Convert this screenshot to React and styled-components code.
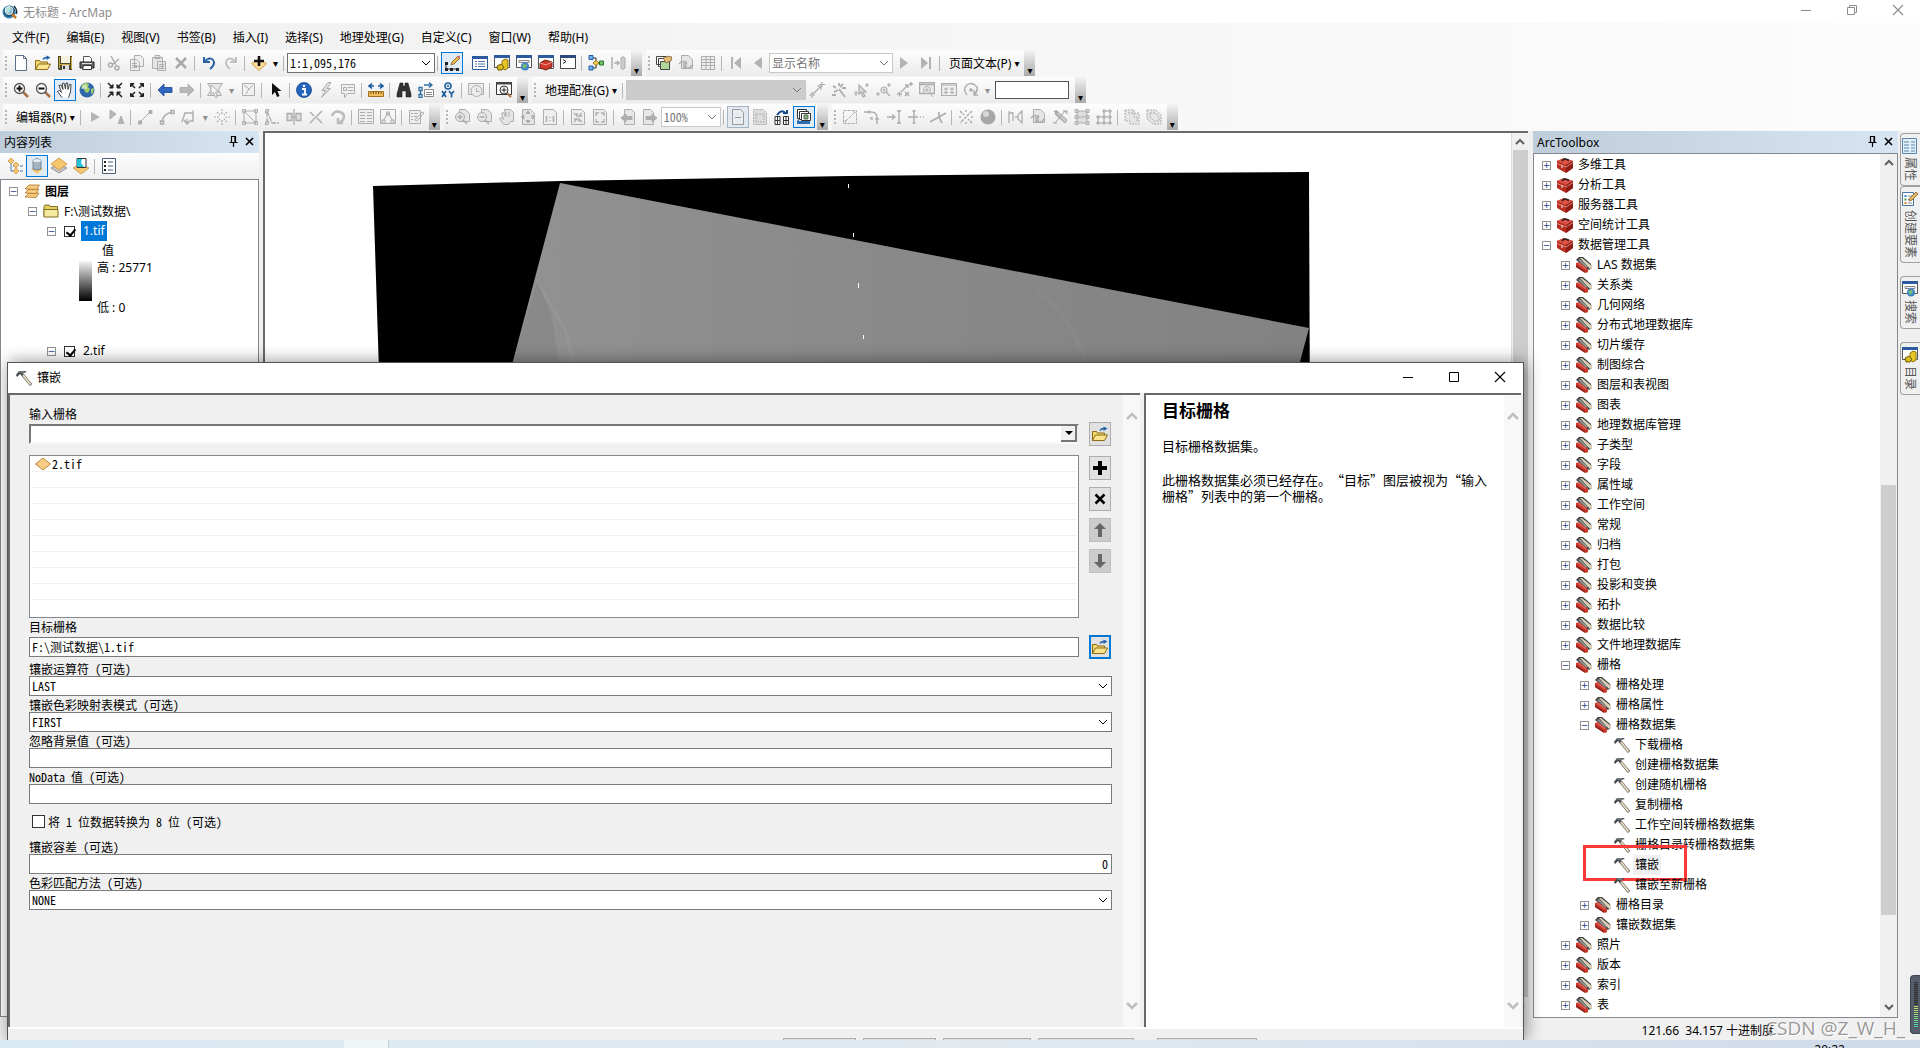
import React, { useState } from "react";
import styled, { createGlobalStyle, css } from "styled-components";

const ink = "#222";
const gray = "#adadad";

const icons = {
  logo: (
    <>
      <circle cx="7" cy="8" r="6.5" fill="#2d7fae" />
      <path d="M2 5q3-4 8-3l3 4-2 5-5 2-4-3z" fill="#164c73" />
      <path d="M4 3l4 0 1 3-3 3-3-2z" fill="#8fd0a5" />
      <circle cx="7" cy="6.500" r="4" fill="#bfe8f4" fillOpacity=".7" stroke="#e6f2f5" />
      <path d="M10 10l4 4" stroke="#c17a2a" strokeWidth="2.500" />
      <path d="M12 2q4 4 2 8" stroke="#102c40" fill="none" strokeWidth="1.500" />
    </>
  ),
  page: <path d="M2.500.5h8l3 3v12h-11zM10.500.5v3h3" fill="#fff" stroke="#5a6f8c" />,
  folder: (
    <>
      <path d="M.5 14.500v-9h4l1 1.500h7v3" fill="#f3d76f" stroke="#8d6a14" />
      <path d="M.5 14.500l3-5.500h12l-3 5.500z" fill="#fbe48e" stroke="#8d6a14" />
      <path d="M8 4.500q1-2 4-2" fill="none" stroke="#1f5fa5" strokeWidth="1.500" />
      <path d="M11.500.5l4 2-4 2.500z" fill="#1f5fa5" />
    </>
  ),
  save: (
    <>
      <path d="M1 1h14v14h-13l-1-1z" fill="#4c4a2a" />
      <path d="M4 1h9v7h-9z" fill="#f5f2dd" />
      <path d="M2 2h1v11h-1zM14 2h1v12h-1zM3 9h10v1H3z" fill="#c8aa40" />
      <path d="M5 10h7v5h-7z" fill="#ddd" />
      <path d="M6 11h2v3h-2z" fill="#333" />
    </>
  ),
  print: (
    <>
      <path d="M4.500 1.500h6l2 2v4h-8z" fill="#fff" stroke="#555" />
      <path d="M1 7h14v6h-14z" fill="#686868" stroke="#222" />
      <path d="M4.500 10.500h8v4h-9z" fill="#fff" stroke="#333" />
      <path d="M3 8.500h10" stroke="#ddd" />
    </>
  ),
  cut: (
    <g fill="none" stroke={gray} strokeWidth="1.500">
      <path d="M4 1l5 9M12 4l-7 6" />
      <circle cx="3.500" cy="10" r="2" />
      <circle cx="10" cy="13" r="2" />
    </g>
  ),
  copy: <path d="M5.500.5h6l3 3v8h-9zM1.500 4.500h6l3 3v8h-9zM3 8.500h5M3 10.500h5M3 12.500h5" fill="#eee" stroke={gray} />,
  paste: <path d="M1.500 2.500h10v11h-10zM4 .5h5v3h-5zM6.500 6.500h8v9h-8zM8 9.500h5M8 11.500h5M8 13.500h5" fill="#e6e6e6" stroke={gray} />,
  del: <path d="M3 3l10 10M13 3l-10 10" stroke="#a8a8a8" strokeWidth="2.500" />,
  undo: <path d="M3 2v5h6M3 7q6-6 9-2t-3 9" stroke="#2b62a5" strokeWidth="2" fill="none" />,
  redo: <path d="M13 2v5h-6M13 7q-6-6-9-2t3 9" stroke="#c2c2c2" strokeWidth="2" fill="none" />,
  addData: (
    <>
      <path d="M.5 8.500l7.500-4 7.500 4-7.500 7z" fill="#fbdc9a" stroke="#d59a3e" />
      <path d="M8 1v10M3 6h10" stroke="#111" strokeWidth="2.600" />
    </>
  ),
  editBar: (
    <>
      <path d="M2 8v6h12" stroke={ink} fill="none" />
      <path d="M1 7h3v3h-3zM1 13h3v3h-3zM6 13h3v3h-3zM12 13h3v3h-3z" fill={ink} />
      <path d="M7 10l1-3 6-6 2 2-6 6z" fill="#eab64c" stroke="#80602b" strokeWidth=".8" />
      <path d="M13 1.500l2 2 1-2-1-1z" fill="#d7686b" />
    </>
  ),
  tocWin: <g><path d="M.5 2.500h15v12h-15z" fill="#fff" stroke="#2c5a9e" /><path d="M0 1h16v3h-16z" fill="#2c5a9e" /><path d="M3 6.500h2M6 6.500h7M3 9h2M6 9h7M3 11.500h2M6 11.500h7" stroke="#5379b0" /></g>,
  catalogWin: <g><path d="M.5 1.500h15v11h-15z" fill="#fff" stroke="#555" /><path d="M0 0h16v3h-16z" fill="#2c5a9e" /><path d="M8 6l3-2 3 1v8l-3 2-3-2z" fill="#e8c526" stroke="#8a7310" /><path d="M3 11l4-2 3 3-2 3h-4z" fill="#d9b81e" stroke="#71600e" /></g>,
  searchWin: <g><path d="M.5 1.500h15v11h-15z" fill="#fff" stroke="#555" /><path d="M0 0h16v3h-16z" fill="#2c5a9e" /><path d="M3 5.500h10v2h-10z" fill="#eef" stroke="#888" /><circle cx="9" cy="11.500" r="4" fill="#3d85c6" /><path d="M6 10l4-1 1 2-3 3z" fill="#7dc06a" /></g>,
  toolboxWin: <g><path d="M.5 1.500h15v12h-15z" fill="#fff" stroke="#555" /><path d="M0 0h16v3h-16z" fill="#2c5a9e" /><path d="M2 8l5-3 7 2v5l-6 3-6-2z" fill="#cf3a2b" stroke="#751d15" /><path d="M2 8l6 2 6-3" stroke="#f3a195" fill="none" /></g>,
  pythonWin: <g><path d="M.5 1.500h15v12h-15z" fill="#fff" stroke="#444" /><path d="M0 0h16v3h-16z" fill="#2c4a7e" /><path d="M3 4.500l3 2-3 2" stroke="#222" fill="none" /></g>,
  model: <g><path d="M4 3h4v10h-4M8 8h4" stroke="#333" fill="none" /><path d="M1 .5h4v4h-4zM1 11h4v4h-4z" fill="#6fb0e8" stroke="#1f5fa5" /><path d="M5 8l3-2.500 3 2.500-3 2.500z" fill="#f6d14b" stroke="#927216" /><path d="M11.500 6h4v4h-4z" fill="#77c46b" stroke="#28722b" /></g>,
  split: <g stroke={gray} fill="#ccc"><path d="M2 2v12M4 8h5M7 6l2 2-2 2" fill="none" strokeWidth="1.500" /><path d="M11 3l2-1.500 2 1.500v10l-2 1.500-2-1.500z" /></g>,
  pages: <g><path d="M.5 1.500h10v8h-10zM2.500 3.500h10v8h-10z" fill="#fff" stroke="#444" /><path d="M4.500 6.500h9v8h-9z" fill="#b2d59e" stroke="#444" /><path d="M7 3q4-3 9-1l-1 4-5 2z" fill="#e3bb74" stroke="#735326" strokeWidth=".7" /></g>,
  refreshPages: <g fill="#e5e5e5" stroke={gray}><path d="M3.500.5h7l4 4v9h-11z" /><path d="M1 9q4-5 8 0M8 6v3h-3M14 10q-4 6-8 1M6 14v-3h3" fill="none" strokeWidth="1.500" /></g>,
  table: <path d="M1.500 1.500h13v13h-13zM1 4.500h14M1 7.500h14M1 10.500h14M6 2v12M10.500 2v12" fill="#eee" stroke={gray} />,
  first: <path d="M3 2h2v12h-2zM13 2v12l-7-6z" fill="#b3b3b3" />,
  prev: <path d="M12 2v12l-8-6z" fill="#b3b3b3" />,
  next: <path d="M4 2v12l8-6z" fill="#b3b3b3" />,
  last: <path d="M11 2h2v12h-2zM3 2v12l7-6z" fill="#b3b3b3" />,
  zoomIn: <g><path d="M10 10l5 5" stroke="#a66f4a" strokeWidth="2.500" /><circle cx="6.500" cy="6.500" r="5" fill="#fff" stroke="#555" strokeWidth="1.300" /><path d="M6.500 3.500v6M3.500 6.500h6" stroke="#111" strokeWidth="2" /></g>,
  zoomOut: <g><path d="M10 10l5 5" stroke="#a66f4a" strokeWidth="2.500" /><circle cx="6.500" cy="6.500" r="5" fill="#fff" stroke="#555" strokeWidth="1.300" /><path d="M3.500 6.500h6" stroke="#111" strokeWidth="2" /></g>,
  pan: <path d="M5 15.500l-4.500-6 2-1 2 2-2.500-7 2-.5 2 4.500-.7-6 1.700-.5 1.500 6 .5-6h1.500l.5 6.500 1.500-5h1.500l-.5 7.500-2 5.500" fill="#fff" stroke="#333" strokeWidth=".9" />,
  globe: <g><circle cx="8" cy="8" r="7.500" fill="#2f67ad" /><path d="M3 3q4-4 7-1l-1 3 2 2-2 4-3-1-1-4-3 1zM12 7l3-1-1 5-2 1z" fill="#9ccb68" /><circle cx="5.500" cy="5" r="2.500" fill="#fff" fillOpacity=".5" /></g>,
  fixedIn: <g fill={ink} stroke={ink}><path d="M1 1l4 4M15 1l-4 4M1 15l4-4M15 15l-4-4" strokeWidth="1.500" /><path d="M6 2.500v3.500h-3.500zM10 2.500v3.500h3.500zM6 13.500v-3.500h-3.500zM10 13.500v-3.500h3.500z" /></g>,
  fixedOut: <g fill={ink} stroke={ink}><path d="M2 2l4 4M14 2l-4 4M2 14l4-4M14 14l-4-4" strokeWidth="1.500" /><path d="M1.500 5v-3.500h3.500zM14.500 5v-3.500h-3.500zM1.500 11v3.500h3.500zM14.500 11v3.500h-3.500z" /></g>,
  back: <path d="M1 8l6-6v3.500h8v5h-8v3.500z" fill="#2f66c0" stroke="#1d4692" strokeWidth=".8" />,
  forward: <path d="M15 8l-6-6v3.500h-8v5h8v3.500z" fill="#b8b8b8" stroke="#a8a8a8" strokeWidth=".8" />,
  selectFeat: <g fill="#e6e6e6" stroke={gray}><path d="M.5 1.500h15l-4 6 3 6h-14l4-6z" /><path d="M4 3l8 7h-3.500l2 5-2 .5-2-5-2.500 2z" fill="#f6f6f6" /></g>,
  clearSel: <path d="M2.500 1.500h12v12h-12zM4 3l5 4-3 5M9 7l4-4" fill="#f1f1f1" stroke={gray} />,
  pointer: <path d="M4 1v12l3-3 2 5 2.500-1-2-5h4z" fill="#111" />,
  info: <g><circle cx="8" cy="8" r="7.500" fill="#2263bb" stroke="#174584" strokeWidth=".8" /><circle cx="8" cy="4" r="1.300" fill="#fff" /><path d="M6 7h3v5M6 12.500h5" stroke="#fff" strokeWidth="1.800" fill="none" /></g>,
  bolt: <path d="M10 .5l-6 8h3.500l-4 7 9-9h-3.500l4-6z" fill="#e0e0e0" stroke={gray} />,
  popup: <path d="M1.500 2.500h13v9h-7l-3 4v-4h-3zM3.500 5.500h3v3h-3zM8 5.500h5M8 8.500h5" fill="#f0f0f0" stroke={gray} />,
  measure: <g><path d="M1 4h5M10 4h5M4 1.500l-3 2.500 3 2.500M12 1.500l3 2.500-3 2.500" stroke="#17599a" strokeWidth="1.600" fill="none" /><path d="M.5 9.500h15v5h-15z" fill="#f0bf57" stroke="#9d7021" /><path d="M3 10v2M5.500 10v2M8 10v2M10.500 10v2M13 10v2" stroke="#74511b" /></g>,
  find: <path d="M4 1h3v3h2v-3h3l3 11v3h-5v-6h-4v6h-5v-3z" fill="#333" stroke="#111" strokeWidth=".5" />,
  findRoute: <g fill="none" stroke="#2f6da5"><path d="M1 5.500h3v3h-3zM1 12.500h3v3h-3zM6 3h7M11 .5l3 2.500-3 2.500M2.500 8v4" strokeWidth="1.300" /><path d="M6.500 7.500h9v7h-9zM8 10.500h6M8 12.500h6" stroke="#888" fill="#fff" /></g>,
  goXY: <g fill="none" stroke="#1f5f9d"><circle cx="8" cy="4" r="3" strokeWidth="1.500" /><circle cx="8" cy="4" r=".8" /><path d="M2 9l4 6M6 9l-4 6M9 9l2.500 3 2.500-3M11.500 12v3.500" strokeWidth="1.700" /></g>,
  time: <g fill="#ececec" stroke={gray}><path d="M.5 1.500h15v11h-15z" /><circle cx="8.500" cy="9" r="5.500" /><path d="M8.500 6v3.500h3" fill="none" /></g>,
  viewer: <g><path d="M.5.5h15v12h-15z" fill="#fff" stroke="#333" /><path d="M0 0h16v2.500h-16z" fill="#444" /><path d="M11 11l4 4" stroke="#a66f4a" strokeWidth="2" /><circle cx="8" cy="8" r="4" fill="#fff" stroke="#333" /><path d="M8 5.500v5M5.500 8h5" stroke="#222" /></g>,
  linkPts: <path d="M0 13h6M3 10v6M4 12l8-8M8 4h4v4M10 2.500h6M13 0v5" stroke={gray} fill="none" strokeWidth="1.200" />,
  wand: <path d="M8 7l6 8M1 13h4M2 4l3 2M8 1v3M12 2l-3 3M3 10l4-2M11 6h4" stroke={gray} fill="none" strokeWidth="1.800" />,
  linkSel: <path d="M1 11h4M3 9v5M6 3v9l2-2 2 5 2-1-2-4h3zM12 3h4M14 1v4" stroke={gray} fill="#ddd" strokeWidth="1.200" />,
  linkZoom: <g stroke={gray} fill="none" strokeWidth="1.200"><circle cx="9" cy="8" r="3" /><path d="M1 12h4M3 10v4M11 10l4 4M12 3h4M14 1v4M9 6.500v3M7.500 8h3" /></g>,
  linkDel: <path d="M0 12h5M2.500 9.500v5M4 10l6-6M8 3h3v3M12 2h4M14 0v4M8 10l4 4M12 10l-4 4" stroke={gray} fill="none" strokeWidth="1.400" />,
  linkView: <g fill="#eee" stroke={gray}><path d="M.5.5h15v11h-15zM0 2.500h16" strokeWidth="1.500" /><circle cx="8" cy="8" r="3.500" /><path d="M8 6v4M6 8h4M11 11l3 4" /></g>,
  linkTable: <path d="M.5 1.500h15v12h-15zM0 3h16M3 7h4M9 7h4M3 10.500h4M9 10.500h4M5 5.500v3M11 5.500v3M5 9v3M11 9v3" fill="#eee" stroke={gray} strokeWidth="1.200" />,
  rotate: <path d="M4 13q-5-6 0-10t10 2q1 5-3 7M11 8v5h4M6 8h4M8 6v4" stroke={gray} fill="none" strokeWidth="1.400" />,
  editTool: <path d="M4 3v10l9-5z" fill="#b5b5b5" />,
  editText: <path d="M1 1v9l6-5zM9 15l3-8 3 8M10 12.500h4" fill="#b5b5b5" stroke={gray} />,
  line: <path d="M3 13l10-10M1.500 12h3v3h-3zM12 1.500h3v3h-3z" stroke={gray} fill={gray} />,
  arc: <path d="M3 13q1-8 10-10M1.500 12h3v3h-3zM12 1.500h3v3h-3z" stroke={gray} fill="none" strokeWidth="1.500" />,
  trace: <path d="M1 13l3-9h8v8h-3l-3 3-3-4M12 1.500v4M6 10v5" stroke={gray} fill="none" strokeWidth="1.400" />,
  burst: <path d="M8 0v5M8 11v5M0 8h5M11 8h5M3 3l3 3M13 3l-3 3M3 13l3-3M13 13l-3-3" stroke={gray} strokeWidth="1.200" strokeDasharray="2 1" />,
  vertices: <path d="M2 2h12v12h-12zM.5.5h3v3h-3zM12.500.5h3v3h-3zM12.500 12.500h3v3h-3zM.5 12.500h3v3h-3zM2 2l12 12" stroke={gray} fill="none" />,
  reshape: <path d="M3 14V2l5 12h7M1.500.5h3v3h-3zM1.500 12.500h3v3h-3z" stroke={gray} fill="none" strokeWidth="1.300" strokeDasharray="5 1" />,
  cutPoly: <path d="M1 4.500h5v7h-5zM10 4.500h5v7h-5zM6 8h4M8 0v16" stroke={gray} fill="#ddd" strokeWidth="1.300" />,
  splitTool: <path d="M2 14l12-12M2 3l4 4M9 9l5 5" stroke={gray} strokeWidth="1.500" />,
  rotateTool: <path d="M2 7q2-6 8-4t3 8l-3 2M8 9v5h5" stroke="#bbb" fill="none" strokeWidth="2.500" />,
  attr: <path d="M.5.5h15v14h-15zM2 3.500h5M9 3.500h5M2 6.500h5M9 6.500h5M2 9.500h5M9 9.500h5M2 12.500h5M9 12.500h5" fill="#eee" stroke={gray} />,
  sketch: <path d="M.5.5h15v14h-15zM3 12l5-8 5 8M2 11h3v3h-3zM6.500 3h3v3h-3zM11 11h3v3h-3z" fill="none" stroke={gray} />,
  create: <path d="M1.500 1.500h11v13h-11zM3 4.500h2M6 4.500h4M3 7.500h2M6 7.500h3M3 10.500h2M7 11l7-8 2 1-7 8z" fill="#eee" stroke={gray} />,
  lZoomIn: <g fill="#e5e5e5" stroke={gray}><path d="M5.500.5h6l4 4v8h-10z" /><circle cx="6" cy="8" r="4.500" /><path d="M6 5.500v5M3.500 8h5M9 11l4 4" strokeWidth="1.500" /></g>,
  lZoomOut: <g fill="#e5e5e5" stroke={gray}><path d="M5.500.5h6l4 4v8h-10z" /><circle cx="6" cy="8" r="4.500" /><path d="M3.500 8h5M9 11l4 4" strokeWidth="1.500" /></g>,
  lPan: <path d="M6.500.5h6l3 3v9h-3l-2 3h-5l-4-6 2-1 2 2-2-6 2-1 2 4zM8 3v5M11 3v5" fill="#e5e5e5" stroke={gray} />,
  lFull: <g fill="#e5e5e5" stroke={gray}><path d="M2.500.5h8l4 4v11h-12z" /><path d="M8 2l2 2.500h-4zM8 14l2-2.500h-4zM1 8l3-2v4zM15 8l-3-2v4z" fill={gray} /></g>,
  lOne: <g fill="#eee" stroke={gray}><path d="M1.500.5h10l3 3v12h-13z" /><path d="M4.500 7v6M11.500 7v6M8 8v1M8 11v1" strokeWidth="1.500" /></g>,
  lIn: <g fill="#eee" stroke={gray}><path d="M1.500.5h10l3 3v12h-13z" /><path d="M4 4l3 3v-3M12 4l-3 3h3M4 13l3-3h-3M12 13l-3-3v3" strokeWidth="1.300" /></g>,
  lOut: <g fill="#eee" stroke={gray}><path d="M1.500.5h10l3 3v12h-13z" /><path d="M4 7v-3h3M12 7v-3h-3M4 10v3h3M12 10v3h-3" fill="none" strokeWidth="1.300" /></g>,
  lBack: <g fill="#e7e7e7" stroke={gray}><path d="M4.500.5h7l3 3v12h-10z" /><path d="M1 9l5-4v2.500h6v3h-6v2.500z" fill={gray} /></g>,
  lFwd: <g fill="#e7e7e7" stroke={gray}><path d="M1.500.5h7l3 3v12h-10z" /><path d="M15 9l-5-4v2.500h-6v3h6v2.500z" fill={gray} /></g>,
  draft: <path d="M2.500.5h8l3 3v12h-11zM5 8.500h6" fill="#e8edf1" stroke="#9a9a9a" />,
  focus: <path d="M1.500.5h10l3 3v12h-13zM4 5h8v8h-8z" fill="#ddd" stroke={gray} strokeDasharray="2 1" />,
  changeLayout: <g><path d="M3 6q5-7 9-1M9 4h4v-3" stroke="#174f8b" fill="none" strokeWidth="2" /><path d="M1 7.500h5v8h-5zM9.500 7.500h5v8h-5zM1 11.500h5M9.500 11.500h5M3.500 7v8M12 7v8" stroke="#333" fill="#fff" /></g>,
  ddp: <g><path d="M1.500.5h9v9h-9z" fill="#fff" stroke="#333" /><path d="M3.500 2.500h9v8h-9z" fill="#fff" stroke="#333" /><path d="M5.500 4.500h9v7h-9z" fill="#fff" stroke="#333" /><path d="M8 6h4v4h-4z" fill="#83b47b" stroke="#444" strokeWidth=".8" /><path d="M1 12l2-2v2h11v3h-13z" fill="#2e6db0" /></g>,
  cSquare: <path d="M1.500 1.500h13v13h-13z M4 12l8-8M3 11v2h2M11 3h2v2" stroke={gray} fill="none" strokeDasharray="3 1" />,
  cFillet: <path d="M0 3h7q6 0 6 6v6M5 1.500v3M11 10h4M6 9h2v2" stroke={gray} fill="none" strokeWidth="1.500" />,
  cExtend: <path d="M1 8h8M6 5.500l3 2.500-3 2.500M13 1v14M11 2h4M11 14h4" stroke={gray} fill="none" strokeWidth="1.400" />,
  cTrim: <path d="M6 1v14M0 8h10M12 8h1M15 8h1M4.500 2h3M4.500 14h3" stroke={gray} fill="none" strokeWidth="1.500" />,
  cIntersect: <path d="M0 13l16-9M9 3q-1 5 3 11" stroke={gray} fill="none" strokeWidth="1.600" />,
  cExplode: <path d="M2 2l4 4M14 14l-4-4M14 2l-12 12M8 1v2M8 13v2M1 8h2M13 8h2" stroke={gray} strokeWidth="1.500" strokeDasharray="3 1" />,
  ball: <g><circle cx="8" cy="8" r="7.500" fill="#a6a6a6" /><circle cx="6" cy="5" r="3" fill="#d8d8d8" /></g>,
  t1: <path d="M1 2v12M1 4h4v8M7 8h3M14 2l-4 4v4l4 4z" stroke={gray} fill="none" strokeWidth="1.300" />,
  t3: <path d="M2 2l11 12M13 2l-10 12M2 2h3v3M11 2h4v3M1 14h4M5 2l10 9-2 3-10-9z" stroke="#a3a3a3" fill="#ccc" />,
  t4: <path d="M3 2h10v12h-10zM3 8h10M1 .5h3v3h-3zM12 .5h3v3h-3zM1 6.500h3v3h-3zM12 6.500h3v3h-3zM1 12.500h3v3h-3zM12 12.500h3v3h-3z" stroke="#b0b0b0" fill="#ddd" />,
  t5: <g stroke="#a3a3a3" fill="#f0f0f0"><path d="M2 8h12v6h-12zM8 2v12M8 2h6v6" fill="none" /><path d="M1 7h2v2h-2zM7 7h2v2h-2zM13 7h2v2h-2zM1 13h2v2h-2zM7 13h2v2h-2zM13 13h2v2h-2zM7 1h2v2h-2zM13 1h2v2h-2z" /></g>,
  merge: <path d="M1 1h9v3h5v11h-9v-3h-5zM4 4h6v4h3v5" stroke={gray} fill="#e5e5e5" strokeDasharray="2 1" />,
  buffer: <path d="M1 1h9l5 5v9h-8l-6-5zM4 4h5l4 4v4h-5l-4-4z" stroke={gray} fill="#e5e5e5" strokeDasharray="2 1" />,
  drawOrder: <g><path d="M4 4v9h5M6 8h5M13 8h3M13 13h3" stroke="#4679ad" fill="none" /><path d="M4 0l3 3-3 3-3-3zM9 4l3 3-3 3-3-3zM9 10l3 3-3 3-3-3z" fill="#f5c46f" stroke="#b9802f" strokeWidth=".6" /></g>,
  source: <g><path d="M2 11l6-3 6 3-6 5z" fill="#f8c66b" /><path d="M4 2q4-3 8 0v9q-4 2-8 0z" fill="#a6b3c1" stroke="#62748a" strokeWidth=".8" /><ellipse cx="8" cy="2.500" rx="4" ry="1.500" fill="#e8edf2" /></g>,
  visible: <g><path d="M0 10l8 5 8-5-8-4z" fill="#c7c7c7" stroke="#777" strokeWidth=".7" /><path d="M0 6l8-6 8 6-8 6z" fill="#f6c66f" stroke="#c0852f" strokeWidth=".7" /></g>,
  selection: <g><path d="M0 10l8-4 8 4-8 6z" fill="#f6c66f" stroke="#c0852f" strokeWidth=".7" /><path d="M4 .5h9v9h-9z" fill="#fff" stroke="#333" /><path d="M4 1h5l-1 4 3 4h-7z" fill="#20c3d8" /></g>,
  options: <g><path d="M1.500.5h13v15h-13z" fill="#fff" stroke="#4a5f7a" /><path d="M7 4h5M7 8h5M7 12h5" stroke="#4a5f7a" /><path d="M4 3v2M4 7v2M4 11v2" stroke="#222" strokeWidth="2" /></g>,
  layers: <g fill="#f5c97e" stroke="#a8742c" strokeWidth=".8"><path d="M1 14l4-4h10l-3 4.500z" /><path d="M1 10l4-4h10l-3 4.500z" /><path d="M1 6l4-4h10.500l-3 4.500z" /></g>,
  closedFolder: <g><path d="M1 13.500v-10l1-1.500h4l1 1.500h7.500v10z" fill="#e6cf60" stroke="#7e6e22" /><path d="M1 6.500h14v7.500h-14z" fill="#f5eaa0" stroke="#7e6e22" /></g>,
  raster: <path d="M.5 8l7.500-6 7.500 6-7.500 6z" fill="#f8cd83" stroke="#b98335" />,
  toolbox: <g><path d="M0 4l7-3 9 3v7l-7 5-9-5z" fill="#b92c20" /><path d="M0 4l7-3 9 3-7 4z" fill="#dd5244" /><path d="M9 8l7-4v7l-7 5z" fill="#8b1d14" /><path d="M5 4q2-3 5-1.500l2 1" stroke="#222" strokeWidth="1.500" fill="none" /><path d="M0 6.500l9 3.500 7-4.500" stroke="#f0a298" fill="none" strokeWidth=".8" /><path d="M5 8v3" stroke="#eee" /></g>,
  toolset: <g><path d="M0 3l3-3h4l8 7 1 4-3 2z" fill="#3a3f3f" /><path d="M4 1h2l10 8v2l-2 1z" fill="#ded3b8" /><path d="M2 3l2-1 8 8-2 1z" fill="#8a9392" /><path d="M0 6l3-1 9 7v3l-2 1-10-6z" fill="#c9382b" /><path d="M0 8l9 6v2l-9-6z" fill="#8e2118" /><path d="M2 6l8 6" stroke="#ef8a7c" strokeWidth=".8" /></g>,
  hammer: <g><path d="M6 4l9 11" stroke="#6f675a" strokeWidth="3" /><path d="M7 5l7.500 9.500" stroke="#e9dfc8" strokeWidth="1.800" /><path d="M0 5l3-4h6l2 1-4 1-1 3-2-2-3 3z" fill="#43484a" /><path d="M3 2h5" stroke="#9ba4a7" /></g>,
  propsTab: <path d="M.5.5h14v15h-14zM2 4h5M9 4h4M2 7h5M9 7h4M2 10h5M9 10h4M2 13h5M9 13h4" fill="#e3f0fa" stroke="#5884ae" />,
  createTab: <g><path d="M.5 1.500h11v13h-11z" fill="#fff" stroke="#4979a3" /><path d="M2.500 4h2v2h-2z" fill="#3580be" /><path d="M2.500 7.500h2v2h-2z" fill="#4c9a41" /><path d="M2.500 11h2v2h-2z" fill="#d98627" /><path d="M6 5h4M6 8.500h2M6 12h4" stroke="#888" /><path d="M7 10l1-3 6-6 2 2-6 6z" fill="#e5b95b" stroke="#82612d" strokeWidth=".8" /></g>,
  min: <path d="M3 8.500h10" stroke="currentColor" />,
  max: <path d="M3.500 3.500h9v9h-9z" fill="none" stroke="currentColor" />,
  restore: <path d="M3.500 5.500h7v7h-7zM5.500 5v-1.500h7v7h-1.500" fill="none" stroke="currentColor" />,
  close: <path d="M3 3l10 10M13 3l-10 10" stroke="currentColor" strokeWidth="1.100" />,
  panelClose: <path d="M4 4l7 7M11 4l-7 7" stroke="#000" strokeWidth="1.600" />,
  pin: <path d="M5.500 8v-5.500h4v5.500M3.500 8.500h8M7.500 9v4M9 3v5" stroke="#000" fill="none" strokeWidth="1.200" />,
  up: <path d="M4 10l4-4 4 4" stroke="currentColor" fill="none" strokeWidth="2" />,
  down: <path d="M4 6l4 4 4-4" stroke="currentColor" fill="none" strokeWidth="2" />,
  bigUp: <path d="M3 11l5-5 5 5" stroke="currentColor" fill="none" strokeWidth="2.500" />,
  bigDown: <path d="M3 5l5 5 5-5" stroke="currentColor" fill="none" strokeWidth="2.500" />,
  chevron: <path d="M4 6l4 4 4-4" stroke="currentColor" fill="none" />,
  solidDown: <path d="M4 5h8l-4 4z" fill="#000" />,
  plus: <path d="M6 1h4v5h5v4h-5v5h-4v-5h-5v-4h5z" fill="#000" />,
  cross: <path d="M3.500 3.500l9 9M12.500 3.500l-9 9" stroke="#000" strokeWidth="2.500" />,
  arrowUp: <path d="M8 1l6 6h-4v8h-4v-8h-4z" fill="#666" />,
  arrowDown: <path d="M8 15l6-6h-4v-8h-4v8h-4z" fill="#666" />,
};

const Icon = ({ name, size = 16 }) => (
  <svg width={size} height={size} viewBox="0 0 16 16" aria-hidden="true">
    {icons[name]}
  </svg>
);

const toolbars = [
  [
    "page folder save print | cut copy paste del | undo redo | addData v | scale | *editBar _ tocWin catalogWin searchWin toolboxWin pythonWin | model split",
    "pages refreshPages table | first prev field next last | pageText v",
  ],
  [
    "zoomIn zoomOut *pan globe | fixedIn fixedOut | back forward | selectFeat w clearSel | pointer | info bolt popup | measure | find findRoute goXY | time | viewer",
    "georef v | target linkPts wand linkSel linkZoom linkDel linkView linkTable rotate w angle",
  ],
  [
    "editor v | editTool editText | line arc trace w burst | vertices reshape cutPoly splitTool rotateTool | attr sketch | create",
    "lZoomIn lZoomOut lPan lFull lOne | lIn lOut | lBack lFwd percent | ~draft focus changeLayout *ddp",
    "cSquare cFillet cExtend cTrim cIntersect | cExplode ball | t1 refreshPages t3 t4 t5 | merge buffer",
  ],
];

const menus = ["文件(F)", "编辑(E)", "视图(V)", "书签(B)", "插入(I)", "选择(S)", "地理处理(G)", "自定义(C)", "窗口(W)", "帮助(H)"];

const tools = [
  [0, "+", "多维工具"],
  [0, "+", "分析工具"],
  [0, "+", "服务器工具"],
  [0, "+", "空间统计工具"],
  [0, "-", "数据管理工具"],
  [1, "+", "LAS 数据集"],
  [1, "+", "关系类"],
  [1, "+", "几何网络"],
  [1, "+", "分布式地理数据库"],
  [1, "+", "切片缓存"],
  [1, "+", "制图综合"],
  [1, "+", "图层和表视图"],
  [1, "+", "图表"],
  [1, "+", "地理数据库管理"],
  [1, "+", "子类型"],
  [1, "+", "字段"],
  [1, "+", "属性域"],
  [1, "+", "工作空间"],
  [1, "+", "常规"],
  [1, "+", "归档"],
  [1, "+", "打包"],
  [1, "+", "投影和变换"],
  [1, "+", "拓扑"],
  [1, "+", "数据比较"],
  [1, "+", "文件地理数据库"],
  [1, "-", "栅格"],
  [2, "+", "栅格处理"],
  [2, "+", "栅格属性"],
  [2, "-", "栅格数据集"],
  [3, "", "下载栅格"],
  [3, "", "创建栅格数据集"],
  [3, "", "创建随机栅格"],
  [3, "", "复制栅格"],
  [3, "", "工作空间转栅格数据集"],
  [3, "", "栅格目录转栅格数据集"],
  [3, "", "镶嵌"],
  [3, "", "镶嵌至新栅格"],
  [2, "+", "栅格目录"],
  [2, "+", "镶嵌数据集"],
  [1, "+", "照片"],
  [1, "+", "版本"],
  [1, "+", "索引"],
  [1, "+", "表"],
];

const Tool = ({ item }) => {
  if (item === "|") return <Separator />;
  if (item === "_") return <Spacer />;
  if (item === "v") return <DropArrow aria-label="更多">▾</DropArrow>;
  if (item === "w") return <DropArrow aria-label="更多" disabled>▾</DropArrow>;
  if (item === "scale")
    return (
      <Picker $width={148}>
        <select aria-label="比例"><option>1:1,095,176</option></select>
        <Icon name="chevron" />
      </Picker>
    );
  if (item === "field")
    return (
      <Picker $width={124} $off>
        <select aria-label="字段" disabled><option>显示名称</option></select>
        <Icon name="chevron" />
      </Picker>
    );
  if (item === "percent")
    return (
      <Picker $width={60} $off>
        <select aria-label="缩放" disabled><option>100%</option></select>
        <Icon name="chevron" />
      </Picker>
    );
  if (item === "target")
    return (
      <Picker $width={180} $off $filled>
        <select aria-label="图层" disabled />
        <Icon name="chevron" />
      </Picker>
    );
  if (item === "angle") return <AngleBox aria-label="旋转角度" />;
  if (item === "editor") return <TextTool>编辑器(R)</TextTool>;
  if (item === "georef") return <TextTool>地理配准(G)</TextTool>;
  if (item === "pageText") return <TextTool>页面文本(P)</TextTool>;
  const active = item[0] === "*";
  const held = item[0] === "~";
  const name = active || held ? item.slice(1) : item;
  return (
    <ToolButton $active={active} $held={held} aria-label={name}>
      <Icon name={name} />
    </ToolButton>
  );
};

const ScrollTrack = ({ thumb, start, size, pale, width }) => (
  <Track $pale={pale} $width={width}>
    <Icon name={pale ? "bigUp" : "up"} />
    {thumb ? <Thumb $start={start} $size={size} /> : <Fill />}
    <Icon name={pale ? "bigDown" : "down"} />
  </Track>
);

const PanelHeader = ({ title }) => (
  <Header>
    <span>{title}</span>
    <PanelButton aria-label="自动隐藏"><Icon name="pin" /></PanelButton>
    <PanelButton aria-label="关闭"><Icon name="panelClose" /></PanelButton>
  </Header>
);

const SelectField = ({ id, label, value }) => (
  <Field>
    <Label htmlFor={id}>{label}</Label>
    <SelectWrap>
      <FormSelect id={id}><option>{value}</option></FormSelect>
      <Icon name="chevron" />
    </SelectWrap>
  </Field>
);

const MapView = () => (
  <MapArea>
    <svg width="1246" height="300" viewBox="265 133 1246 300" aria-label="1.tif">
      <defs>
        <linearGradient id="ground" x1="0" x2="1">
          <stop offset="0" stopColor="#929292" />
          <stop offset=".5" stopColor="#898989" />
          <stop offset="1" stopColor="#828282" />
        </linearGradient>
      </defs>
      <path d="M373 186L560 181 848 176 1130 173 1309 172 1310 433H381z" />
      <path d="M560 183L1309 328 1281 433H494z" fill="url(#ground)" />
      <path d="M537 281q18 32 28 48l8 33" stroke="#a2a2a2" strokeWidth="3" strokeOpacity=".3" fill="none" />
      <path d="M537 281l14 32 8 49h-46z" fill="#777" fillOpacity=".3" />
      <path d="M1035 290q40 30 50 72" stroke="#979797" strokeWidth="4" strokeOpacity=".2" fill="none" />
      <path d="M848.500 184v4M853.500 233v4M858.500 283v5M863.500 335v4" stroke="#fff" />
    </svg>
  </MapArea>
);

const Contents = () => (
  <Side>
    <PanelHeader title="内容列表" />
    <ListTools>
      {["drawOrder", "*source", "visible", "selection", "|", "options"].map((item) => (
        <Tool key={item} item={item} />
      ))}
    </ListTools>
    <LayerTree>
      <LayerRow $level={0}>
        <Expander aria-label="折叠">−</Expander>
        <Icon name="layers" />
        <b>图层</b>
      </LayerRow>
      <LayerRow $level={1}>
        <Expander aria-label="折叠">−</Expander>
        <Icon name="closedFolder" />
        <span>F:\测试数据\</span>
      </LayerRow>
      <LayerRow $level={2}>
        <Expander aria-label="折叠">−</Expander>
        <Check type="checkbox" id="layer1" defaultChecked />
        <LayerName htmlFor="layer1" $selected>1.tif</LayerName>
      </LayerRow>
      <LegendTitle>值</LegendTitle>
      <Legend>
        <Ramp />
        <LegendText>
          <span>高 : 25771</span>
          <span>低 : 0</span>
        </LegendText>
      </Legend>
      <LayerRow $level={2}>
        <Expander aria-label="折叠">−</Expander>
        <Check type="checkbox" id="layer2" defaultChecked />
        <LayerName htmlFor="layer2">2.tif</LayerName>
      </LayerRow>
    </LayerTree>
  </Side>
);

const Toolbox = () => (
  <ToolPanel>
    <PanelHeader title="ArcToolbox" />
    <ToolBody>
      <ToolTree>
        {tools.map(([level, state, name]) => (
          <ToolRow key={name} $level={level}>
            {state ? <Expander aria-label={name}>{state === "-" ? "−" : "+"}</Expander> : <NoExpander />}
            <Icon name={level === 0 ? "toolbox" : level === 3 ? "hammer" : "toolset"} />
            <ToolName $current={name === "镶嵌"}>{name}</ToolName>
            {name === "镶嵌" && <Highlight />}
          </ToolRow>
        ))}
      </ToolTree>
      <ScrollTrack thumb start={30} size={50} width={17} />
    </ToolBody>
  </ToolPanel>
);

const MosaicDialog = () => {
  const [target, setTarget] = useState("F:\\测试数据\\1.tif");

  return (
    <Dialog role="dialog" aria-label="镶嵌">
      <DialogTitle>
        <Icon name="hammer" />
        <span>镶嵌</span>
        <WindowButton aria-label="最小化"><Icon name="min" /></WindowButton>
        <WindowButton aria-label="最大化"><Icon name="max" /></WindowButton>
        <WindowButton aria-label="关闭"><Icon name="close" /></WindowButton>
      </DialogTitle>
      <DialogBody>
        <FormPane>
          <Form>
            <Label htmlFor="input">输入栅格</Label>
            <Line>
              <ClassicWrap>
                <ClassicSelect id="input" />
                <ClassicArrow><Icon name="solidDown" /></ClassicArrow>
              </ClassicWrap>
              <SquareButton aria-label="浏览输入栅格"><Icon name="folder" /></SquareButton>
            </Line>
            <ListLine>
              <RasterList>
                <li><Icon name="raster" /><span>2.tif</span></li>
                {Array.from({ length: 9 }, (_, i) => <li key={i} />)}
              </RasterList>
              <Stack>
                <SquareButton aria-label="添加"><Icon name="plus" /></SquareButton>
                <SquareButton aria-label="移除"><Icon name="cross" /></SquareButton>
                <SquareButton aria-label="上移" disabled><Icon name="arrowUp" /></SquareButton>
                <SquareButton aria-label="下移" disabled><Icon name="arrowDown" /></SquareButton>
              </Stack>
            </ListLine>
            <Label htmlFor="target">目标栅格</Label>
            <Line>
              <TextBox id="target" value={target} onChange={(e) => setTarget(e.target.value)} />
              <SquareButton $focused aria-label="浏览目标栅格"><Icon name="folder" /></SquareButton>
            </Line>
            <SelectField id="operator" label="镶嵌运算符 (可选)" value="LAST" />
            <SelectField id="colormap" label="镶嵌色彩映射表模式 (可选)" value="FIRST" />
            <Field>
              <Label htmlFor="background">忽略背景值 (可选)</Label>
              <TextBox id="background" />
            </Field>
            <Field>
              <Label htmlFor="nodata">NoData 值 (可选)</Label>
              <TextBox id="nodata" />
            </Field>
            <CheckLine>
              <Check type="checkbox" id="convert" $large />
              <label htmlFor="convert">将 1 位数据转换为 8 位 (可选)</label>
            </CheckLine>
            <Field>
              <Label htmlFor="tolerance">镶嵌容差 (可选)</Label>
              <TextBox id="tolerance" defaultValue="0" $right />
            </Field>
            <SelectField id="matching" label="色彩匹配方法 (可选)" value="NONE" />
          </Form>
          <ScrollTrack pale width={17} />
        </FormPane>
        <HelpPane>
          <HelpText>
            <h2>目标栅格</h2>
            <p>目标栅格数据集。</p>
            <p>此栅格数据集必须已经存在。“目标”图层被视为“输入栅格”列表中的第一个栅格。</p>
          </HelpText>
          <ScrollTrack pale width={17} />
        </HelpPane>
      </DialogBody>
      <DialogFooter>
        <FootButton $width={73} aria-label="确定" />
        <FootButton $width={73} aria-label="取消" />
        <FootButton $width={88} aria-label="环境" />
        <FootButton $width={96} aria-label="隐藏帮助" />
        <FootButton $width={100} $apart aria-label="工具帮助" />
      </DialogFooter>
    </Dialog>
  );
};

const App = () => (
  <Window>
    <GlobalStyle />
    <TitleBar>
      <Icon name="logo" />
      <span>无标题 - ArcMap</span>
      <WindowButton $wide aria-label="最小化"><Icon name="min" /></WindowButton>
      <WindowButton $wide aria-label="还原"><Icon name="restore" /></WindowButton>
      <WindowButton $wide aria-label="关闭"><Icon name="close" /></WindowButton>
    </TitleBar>
    <Chrome>
      <MenuBar>
        {menus.map((menu) => <MenuButton key={menu}>{menu}</MenuButton>)}
      </MenuBar>
      {toolbars.map((row, r) => (
        <ToolbarRow key={r}>
          {row.map((bar) => (
            <Toolbar key={bar}>
              <Grip />
              {bar.split(" ").map((item, i) => <Tool key={i} item={item} />)}
              <Overflow aria-label="工具栏选项">▾</Overflow>
            </Toolbar>
          ))}
        </ToolbarRow>
      ))}
    </Chrome>
    <Workspace>
      <Contents />
      <MapFrame>
        <MapView />
        <ScrollTrack thumb start={0} size={96} width={16} />
      </MapFrame>
      <Toolbox />
      <Tabs>
        <Tab><Icon name="propsTab" />属性</Tab>
        <Tab $gap><Icon name="createTab" />创建要素</Tab>
        <Tab $gap><Icon name="searchWin" />搜索</Tab>
        <Tab><Icon name="catalogWin" />目录</Tab>
      </Tabs>
    </Workspace>
    <StatusBar>
      <span>121.66&nbsp; 34.157 十进制度</span>
    </StatusBar>
    <Taskbar>
      <TaskItem />
      <Clock>20:22</Clock>
    </Taskbar>
    <MosaicDialog />
    <Watermark>CSDN @Z_W_H_</Watermark>
    <Meter />
  </Window>
);
export default App;

const GlobalStyle = createGlobalStyle`
  * {
    box-sizing: border-box;
  }
  body {
    margin: 0;
    font-family: "Noto Sans", "Noto Sans CJK SC", sans-serif;
    font-size: 12px;
    color: #000;
  }
  button, input, select {
    font: inherit;
    color: inherit;
    margin: 0;
    padding: 0;
    border-radius: 0;
  }
  button {
    border: 0;
    background: none;
  }
  svg {
    display: block;
    flex: none;
  }
`;
const formFont = css`
  font-family: "Noto Sans Mono CJK SC", "Noto Sans CJK SC", monospace;
`;
const Window = styled.div`
  position: relative;
  display: flex;
  flex-direction: column;
  height: 100vh;
  overflow: hidden;
  background: #f0f0f0;
`;
const TitleBar = styled.header`
  display: flex;
  align-items: center;
  height: 23px;
  padding: 0 2px;
  gap: 5px;
  background: #fff;
  color: #8c8c8c;
  span {
    flex: 1;
  }
`;
const WindowButton = styled.button`
  display: flex;
  justify-content: center;
  align-items: center;
  width: 41px;
  height: 100%;
  padding-bottom: ${({ $wide }) => ($wide ? 3 : 2)}px;
`;
const Chrome = styled.div`
  height: 108px;
  background: linear-gradient(90deg, #f0f0f0, #fcfcfc);
`;
const MenuBar = styled.nav`
  display: flex;
  align-items: center;
  gap: 17px;
  height: 27px;
  padding-left: 12px;
`;
const MenuButton = styled.button`
  white-space: nowrap;
`;
const ToolbarRow = styled.div`
  display: flex;
  gap: 4px;
  height: 27px;
  padding-left: 3px;
`;
const Toolbar = styled.div`
  display: flex;
  align-items: center;
  height: 26px;
  background: linear-gradient(#fdfdfd, #ebebeb);
`;
const Grip = styled.i`
  width: 2px;
  height: 14px;
  margin: 0 3px 0 2px;
  background: repeating-linear-gradient(#b5b5b5 0 2px, transparent 2px 4px);
`;
const Separator = styled.i`
  width: 1px;
  height: 15px;
  margin: 0 3px 0 2px;
  background: #b5b5b5;
`;
const Spacer = styled.i`
  width: 6px;
`;
const ToolButton = styled.button`
  display: flex;
  align-items: center;
  justify-content: center;
  width: 22px;
  height: 22px;
  ${({ $active }) => $active && css`
    border: 1px solid #0078d7;
    background: #dfebf6;
  `}
  ${({ $held }) => $held && css`
    border: 1px solid #a5b5c4;
    background: #e3e9ee;
  `}
`;
const DropArrow = styled.button`
  width: 11px;
  font-size: 10px;
  font-family: "DejaVu Sans", sans-serif;
  text-align: center;
  &:disabled {
    color: #8f8f8f;
  }
`;
const TextTool = styled.button`
  padding-left: 6px;
  white-space: nowrap;
`;
const Picker = styled.div`
  display: flex;
  align-items: center;
  width: ${({ $width }) => $width}px;
  height: 20px;
  border: 1px solid ${({ $off }) => ($off ? "#c9c9c9" : "#707070")};
  background: ${({ $filled }) => ($filled ? "#ccc" : "#fff")};
  color: ${({ $off }) => ($off ? "#777" : "#000")};
  ${formFont}
  select {
    flex: 1;
    min-width: 0;
    height: 18px;
    padding: 0 0 2px 2px;
    border: 0;
    appearance: none;
    background: transparent;
    opacity: 1;
  }
`;
const AngleBox = styled.input`
  width: 74px;
  height: 18px;
  margin: 0 4px 0 2px;
  border: 1px solid #555;
  background: #fff;
`;
const Overflow = styled.button`
  align-self: stretch;
  display: flex;
  align-items: flex-end;
  justify-content: center;
  width: 11px;
  margin-left: 2px;
  background: linear-gradient(#f4f4f4, #a9a9a9);
  font-family: "DejaVu Sans", sans-serif;
  font-size: 10px;
  line-height: 10px;
`;
const Workspace = styled.main`
  display: flex;
  flex: 1;
  min-height: 0;
`;
const Side = styled.aside`
  display: flex;
  flex-direction: column;
  width: 259px;
  margin-right: 4px;
  padding-bottom: 1px;
`;
const Header = styled.div`
  display: flex;
  align-items: center;
  height: 22px;
  flex: none;
  padding: 0 1px 0 4px;
  background: linear-gradient(90deg, #bfcddb, #d7e4f2);
  span {
    flex: 1;
  }
`;
const PanelButton = styled.button`
  width: 16px;
`;
const ListTools = styled.div`
  display: flex;
  align-items: center;
  height: 26px;
  flex: none;
  padding-left: 4px;
  background: linear-gradient(#fdfdfd, #efefef);
`;
const LayerTree = styled.div`
  flex: 1;
  padding-top: 1px;
  border: 1px solid #828790;
  background: #fff;
`;
const LayerRow = styled.div`
  display: flex;
  align-items: center;
  height: 20px;
  padding-left: ${({ $level }) => 8 + $level * 19}px;
  svg {
    margin: 0 5px 0 6px;
  }
`;
const Expander = styled.button`
  display: flex;
  align-items: center;
  justify-content: center;
  width: 9px;
  height: 9px;
  flex: none;
  border: 1px solid #919191;
  background: #fff;
  color: #24408c;
  font-family: "DejaVu Sans", sans-serif;
  font-size: 9px;
  line-height: 7px;
`;
const NoExpander = styled.i`
  width: 9px;
`;
const Check = styled.input`
  appearance: none;
  width: ${({ $large }) => ($large ? 13 : 11)}px;
  height: ${({ $large }) => ($large ? 13 : 11)}px;
  border: 1px solid #333;
  background: #fff;
  ${LayerRow} & {
    margin: 0 6px 0 8px;
  }
  &:checked::after {
    content: "";
    display: block;
    width: 4px;
    height: 7px;
    margin: 0 0 0 3px;
    border: solid #000;
    border-width: 0 2px 2px 0;
    transform: rotate(40deg);
  }
`;
const LayerName = styled.label`
  padding: 0 2px;
  line-height: 20px;
  background: ${({ $selected }) => ($selected ? "#0078d7" : "transparent")};
  color: ${({ $selected }) => ($selected ? "#fff" : "#000")};
`;
const LegendTitle = styled.div`
  height: 20px;
  padding-left: 101px;
  line-height: 19px;
`;
const Legend = styled.div`
  display: flex;
  gap: 5px;
  height: 80px;
  padding-left: 78px;
`;
const Ramp = styled.div`
  width: 13px;
  height: 40px;
  background: linear-gradient(#f5f5f5, #000);
`;
const LegendText = styled.div`
  display: flex;
  flex-direction: column;
  gap: 26px;
  line-height: 14px;
`;
const MapFrame = styled.section`
  display: flex;
  flex: 1;
  min-width: 0;
  border-top: 2px solid #696969;
  border-left: 2px solid #696969;
`;
const MapArea = styled.div`
  flex: 1;
  min-width: 0;
  overflow: hidden;
  border-right: 1px solid #ddd;
  background: #fff;
`;
const Track = styled.div`
  display: flex;
  flex-direction: column;
  align-items: center;
  flex: none;
  width: ${({ $width }) => $width}px;
  background: ${({ $pale }) => ($pale ? "#f8f8f8" : "#f0f0f0")};
  color: ${({ $pale }) => ($pale ? "#bfbfbf" : "#606060")};
  padding: ${({ $pale }) => ($pale ? "13px 0" : "1px 0 2px")};
`;
const Thumb = styled.i`
  width: 15px;
  background: #cdcdcd;
  margin-top: ${({ $start }) => $start}vh;
  height: ${({ $size }) => $size}%;
  & + svg {
    margin-top: auto;
  }
`;
const Fill = styled.i`
  flex: 1;
`;
const ToolPanel = styled.aside`
  display: flex;
  flex-direction: column;
  width: 365px;
  margin-left: 5px;
`;
const ToolBody = styled.div`
  display: flex;
  flex: 1;
  min-height: 0;
  border: 1px solid #828790;
  background: #fff;
`;
const ToolTree = styled.div`
  flex: 1;
  min-height: 0;
  padding-top: 1px;
`;
const ToolRow = styled.div`
  position: relative;
  display: flex;
  align-items: center;
  height: 20px;
  padding-left: ${({ $level }) => 8 + $level * 19}px;
  svg {
    margin: 0 3px 0 6px;
  }
`;
const ToolName = styled.span`
  padding: 0 2px;
  line-height: 20px;
  background: ${({ $current }) => ($current ? "#f0f0f0" : "transparent")};
`;
const Highlight = styled.i`
  position: absolute;
  left: 49px;
  top: 0;
  width: 104px;
  height: 36px;
  margin-top: -10px;
  border: 3px solid #fb3a37;
`;
const Tabs = styled.div`
  display: flex;
  flex-direction: column;
  width: 20px;
  margin-left: 2px;
  padding-top: 2px;
`;
const Tab = styled.button`
  display: flex;
  align-items: center;
  justify-content: flex-start;
  gap: 3px;
  padding: 4px 2px 4px 0;
  margin-bottom: ${({ $gap }) => ($gap ? 13 : 0)}px;
  border: 1px solid #a0a0a0;
  border-right: 0;
  border-radius: 4px 0 0 4px;
  writing-mode: vertical-rl;
  text-orientation: sideways;
  line-height: 16px;
  color: #555;
`;
const StatusBar = styled.footer`
  display: flex;
  justify-content: flex-end;
  align-items: center;
  height: 22px;
  flex: none;
  padding: 2px 146px 0 0;
`;
const Taskbar = styled.div`
  display: flex;
  justify-content: space-between;
  height: 8px;
  flex: none;
  padding: 0 75px 0 344px;
  overflow: hidden;
  background: linear-gradient(90deg, #d9e9f2, #e2eaf0 50%, #cfdaea);
`;
const TaskItem = styled.i`
  width: 45px;
  border-right: 1px solid #c2cfda;
  background: #f0f5f8;
`;
const Clock = styled.span`
  padding-top: 2px;
  line-height: 16px;
`;
const Dialog = styled.section`
  position: absolute;
  top: 362px;
  bottom: 8px;
  left: 7px;
  right: 396px;
  display: flex;
  flex-direction: column;
  border: 1px solid #555;
  border-bottom: 0;
  background: #f0f0f0;
  box-shadow: 2px 0 16px rgba(0, 0, 0, 0.45);
  clip-path: inset(-20px -20px 0 -20px);
`;
const DialogTitle = styled.div`
  display: flex;
  align-items: center;
  height: 30px;
  flex: none;
  padding: 0 3px 0 8px;
  gap: 5px;
  background: #fff;
  > span {
    flex: 1;
    padding-bottom: 2px;
  }
`;
const DialogBody = styled.div`
  display: flex;
  flex: 1;
  min-height: 0;
  gap: 4px;
  padding-right: 2px;
  border-bottom: 2px solid #fff;
`;
const pane = css`
  display: flex;
  border-top: 2px solid #696969;
  border-left: 2px solid #696969;
`;
const FormPane = styled.div`
  ${pane}
  flex: 1;
  min-width: 0;
`;
const Form = styled.form`
  display: flex;
  flex-direction: column;
  flex: 1;
  min-width: 0;
  padding: 12px 11px 0 19px;
  ${formFont}
`;
const Label = styled.label`
  height: 14px;
  line-height: 14px;
`;
const Line = styled.div`
  display: flex;
  align-items: center;
  gap: 10px;
  height: 24px;
  padding-right: 1px;
  margin: 1px 0;
`;
const control = css`
  width: 100%;
  height: 20px;
  padding: 0 3px 2px 2px;
  border: 1px solid #7a7a7a;
  background: #fff;
`;
const TextBox = styled.input`
  ${control}
  text-align: ${({ $right }) => ($right ? "right" : "left")};
`;
const SelectWrap = styled.div`
  position: relative;
  svg {
    position: absolute;
    right: 1px;
    top: 2px;
    pointer-events: none;
  }
`;
const FormSelect = styled.select`
  ${control}
  display: block;
  appearance: none;
`;
const ClassicWrap = styled.div`
  display: flex;
  flex: 1;
  height: 20px;
  border: 2px solid #777;
  border-right-color: #eee;
  border-bottom-color: #f8f8f8;
  background: #fff;
`;
const ClassicSelect = styled.select`
  flex: 1;
  border: 0;
  appearance: none;
  background: transparent;
`;
const ClassicArrow = styled.span`
  width: 16px;
  height: 16px;
  border-right: 2px solid #777;
  border-bottom: 2px solid #777;
  background: #f0f0f0;
`;
const SquareButton = styled.button`
  display: flex;
  align-items: center;
  justify-content: center;
  width: 22px;
  height: 24px;
  flex: none;
  border: ${({ $focused }) => ($focused ? "2px solid #0078d7" : "1px solid #adadad")};
  background: #e1e1e1;
  &:disabled {
    background: #ccc;
    border-color: #bfbfbf;
  }
`;
const ListLine = styled.div`
  display: flex;
  gap: 10px;
  margin: 8px 0 2px;
  padding-right: 1px;
`;
const RasterList = styled.ul`
  flex: 1;
  height: 163px;
  margin: 0;
  padding: 0 2px;
  border: 1px solid #828790;
  background: #fff;
  list-style: none;
  li {
    display: flex;
    align-items: center;
    gap: 1px;
    height: 16px;
    padding-left: 3px;
    line-height: 15px;
    border-bottom: 1px solid #f0f0f0;
  }
  li:last-child {
    border: 0;
  }
`;
const Stack = styled.div`
  display: flex;
  flex-direction: column;
  gap: 7px;
  padding-top: 1px;
`;
const Field = styled.div`
  display: flex;
  flex-direction: column;
  margin-top: 2px;
`;
const CheckLine = styled.div`
  display: flex;
  align-items: center;
  gap: 3px;
  height: 34px;
  padding-left: 3px;
`;
const HelpPane = styled.div`
  ${pane}
  width: 377px;
  background: #fff;
`;
const HelpText = styled.div`
  flex: 1;
  padding: 5px 14px 0 16px;
  font-family: "Noto Sans CJK SC", sans-serif;
  font-size: 13px;
  line-height: 16px;
  text-spacing-trim: space-all;
  h2 {
    margin: 0;
    font-size: 17px;
    line-height: 20px;
  }
  p {
    margin: 18px 0;
  }
`;
const DialogFooter = styled.div`
  display: flex;
  align-items: flex-end;
  justify-content: flex-end;
  gap: 7px;
  height: 11px;
  flex: none;
  padding-right: 266px;
`;
const FootButton = styled.button`
  width: ${({ $width }) => $width}px;
  height: 2px;
  margin-left: ${({ $apart }) => ($apart ? 16 : 0)}px;
  border: 1px solid #adadad;
  border-bottom: 0;
  background: #e1e1e1;
`;
const Watermark = styled.div`
  position: absolute;
  right: 15px;
  bottom: 4px;
  font-family: "Open Sans", sans-serif;
  font-size: 19px;
  line-height: 32px;
  color: rgba(120, 120, 120, 0.75);
  text-shadow: 1px 1px 0 #fff;
`;
const Meter = styled.div`
  position: absolute;
  right: 0;
  bottom: 14px;
  width: 10px;
  height: 59px;
  border: 1px solid #3d4350;
  border-right: 0;
  border-radius: 4px 0 0 4px;
  background: #565d6d;
  &::after {
    content: "";
    display: block;
    width: 4px;
    height: 46px;
    margin: 6px 0 0 3px;
    background:
      repeating-linear-gradient(transparent 0 1px, #454b59 1px 2px),
      linear-gradient(#333 0 24px, #cbe35e 24px, #4fe0c0);
  }
`;
